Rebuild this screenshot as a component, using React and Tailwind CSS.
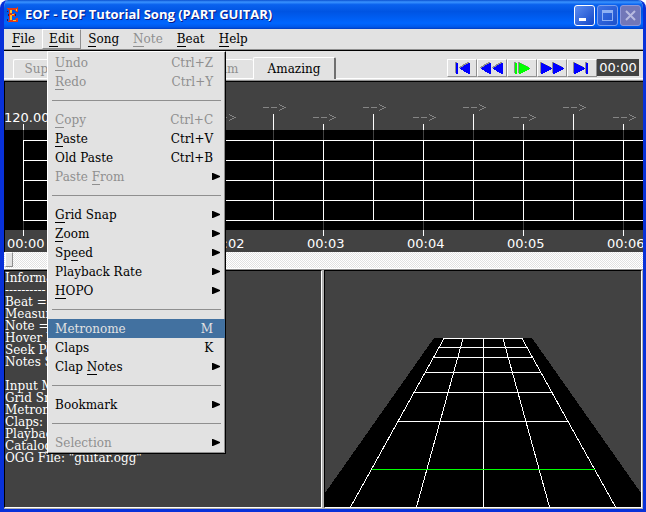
import React from 'react';

const SERIF = "font-['DejaVu_Serif','Liberation_Serif',serif]";
const DIGITS = "font-['DejaVu_Sans','Liberation_Sans',sans-serif]";

const menus = [
  { label: 'File', key: 'F' },
  { label: 'Edit', key: 'E', open: true },
  { label: 'Song', key: 'S' },
  { label: 'Note', key: 'N', disabled: true },
  { label: 'Beat', key: 'B' },
  { label: 'Help', key: 'H' },
];

const editItems = [
  { label: 'Undo', key: 'U', shortcut: 'Ctrl+Z', disabled: true },
  { label: 'Redo', key: 'R', shortcut: 'Ctrl+Y', disabled: true },
  null,
  { label: 'Copy', key: 'C', shortcut: 'Ctrl+C', disabled: true },
  { label: 'Paste', key: 'P', shortcut: 'Ctrl+V' },
  { label: 'Old Paste', shortcut: 'Ctrl+B' },
  { label: 'Paste From', key: 'F', sub: true, disabled: true },
  null,
  { label: 'Grid Snap', key: 'G', sub: true },
  { label: 'Zoom', key: 'Z', sub: true },
  { label: 'Speed', key: 'e', sub: true },
  { label: 'Playback Rate', sub: true },
  { label: 'HOPO', key: 'H', sub: true },
  null,
  { label: 'Metronome', shortcut: 'M', active: true },
  { label: 'Claps', shortcut: 'K' },
  { label: 'Clap Notes', key: 'N', sub: true },
  null,
  { label: 'Bookmark', sub: true },
  null,
  { label: 'Selection', sub: true, disabled: true },
];

const info = [
  'Informa',
  '----------',
  'Beat =',
  'Measur',
  'Note =',
  'Hover N',
  'Seek Po',
  'Notes S',
  '',
  'Input M',
  'Grid Sn',
  'Metron',
  'Claps: O',
  'Playbac',
  'Catalog',
  'OGG File: "guitar.ogg"',
];

function Label({ text, hot }) {
  const i = hot ? text.indexOf(hot) : -1;
  if (i < 0) return <span>{text}</span>;
  return (
    <span>
      {text.slice(0, i)}
      <span className="border-b border-current">{hot}</span>
      {text.slice(i + 1)}
    </span>
  );
}

function EofIcon() {
  return (
    <svg className="h-4 w-4" viewBox="0 0 16 16" shapeRendering="crispEdges" aria-hidden="true">
      <path d="M2 1h10v-1h1v5h-2V4h-1V3H7v4h2V6h1v4H9V9H7v4h3v-1h1v-1h2v4H3v-1h1V3H3V2H2z" fill="#e03a18" />
      <path d="M5 3h2v3H5zM5 8h2v5H5zM11 2h1v2h-1zM7 7h2v1H7zM8 13h3v1H8z" fill="#ffc02e" />
      <path d="M2 4h1v1H2zM3 7h1v2H3zM2 12h1v2H2zM10 7h1v2h-1z" fill="#5a1020" />
    </svg>
  );
}

function CaptionButton({ kind, name }) {
  const tone =
    kind === 'min'
      ? 'border-white bg-[linear-gradient(135deg,#5d8df0,#1247c8)]'
      : kind === 'max'
        ? 'border-[#7a9fee] bg-[linear-gradient(135deg,#3f72e4,#1b50cc)]'
        : 'border-[#8f97d8] bg-[#7277b8]';
  return (
    <button type="button" aria-label={name} className={'flex size-[21px] items-center justify-center rounded-[3px] border ' + tone}>
      <svg className="size-[19px]" viewBox="0 0 19 19" shapeRendering={kind === 'close' ? 'auto' : 'crispEdges'}>
        {kind === 'min' && <path d="M4 12h7v3H4z" fill="#fff" />}
        {kind === 'max' && <path d="M4 4h11v11H4zM5 7v7h9V7z" fill="#8eb0f4" fillRule="evenodd" />}
        {kind === 'close' && <path d="M5 5l9 9M14 5l-9 9" stroke="#b9bbe0" strokeWidth="2" />}
      </svg>
    </button>
  );
}

const transport = [
  ['Rewind to start', '#00f', ['M8 5h2v11H8z', 'M22 5v11h-1L12 11v-1l9-5z']],
  ['Rewind', '#00f', ['M13 5v11h-1L3 11v-1l9-5z', 'M25 5v11h-1l-9-5v-1l9-5z']],
  ['Play', '#0f0', ['M7 5h2v11H7z', 'M11 5h1l10 5v1l-10 5h-1z']],
  ['Fast forward', '#00f', ['M3 5h1l10 5v1L4 16H3z', 'M15 5h1l10 5v1l-10 5h-1z']],
  ['Skip to end', '#00f', ['M6 5h1l10 5v1L7 16H6z', 'M18 5h2v11h-2z']],
];

function Transport() {
  return (
    <div className="mt-2 mr-1 flex h-[18px]">
      {transport.map(([name, color, shapes]) => (
        <button key={name} type="button" aria-label={name} className="h-[18px] w-[30px] border border-[#8f8f8f] border-t-white border-l-white">
          <svg className="block h-4 w-7" viewBox="0 2 28 16" shapeRendering="crispEdges">
            <g transform="translate(-1 -1)" fill="#8f8f8f">{shapes.map((d) => <path key={d} d={d} />)}</g>
            <g fill={color}>{shapes.map((d) => <path key={d} d={d} />)}</g>
          </svg>
        </button>
      ))}
      <output aria-label="Position" className={'flex h-[17px] w-[42px] items-center justify-center bg-[#424242] text-[13px] text-white ' + DIGITS}>
        00:00
      </output>
    </div>
  );
}

function PianoRoll() {
  const beats = Array.from({ length: 13 }, (_, i) => i);
  return (
    <svg className="block h-[170px] w-full bg-[#424242]" role="img" aria-label="Note editor">
      <rect y="48" width="100%" height="100" fill="#000" />
      <g shapeRendering="crispEdges">
        {[58, 78, 98, 118, 138].map((y) => (
          <rect key={y} x="18" y={y} width="100%" height="1" fill="#fff" />
        ))}
        {beats.map((i) => {
          const x = 18 + i * 50;
          const second = i % 2 === 0;
          return (
            <g key={i}>
              <rect x={x} y={second ? 42 : 32} width="1" height={second ? 6 : 16} fill="#fff" />
              <rect x={x} y="48" width="1" height="10" fill="#424242" />
              <rect x={x} y="58" width="1" height="81" fill="#fff" />
              {second && <rect x={x} y="139" width="1" height="9" fill="#424242" />}
              {second && <rect x={x} y="148" width="1" height="6" fill="#fff" />}
              {i > 0 && (
                <path
                  d={`M${x - 10} ${second ? 35.5 : 25.5}h6m2 0h6m2-3l6 3l-6 3`}
                  fill="none"
                  stroke="#858585"
                />
              )}
            </g>
          );
        })}
      </g>
      <g fill="#fff" className={'text-[13px] ' + DIGITS}>
        <text x="-1" y="40">120.00</text>
        {[0, 1, 2, 3, 4, 5, 6].map((s) => (
          <text key={s} x={2 + s * 100} y="166">{`00:0${s}`}</text>
        ))}
      </g>
    </svg>
  );
}

function Fretboard() {
  return (
    <svg className="block h-full w-full" viewBox="0 0 316 236" preserveAspectRatio="xMidYMin slice" shapeRendering="crispEdges" role="img" aria-label="3D preview">
      <path d="M109 67h98l109 155v14H0v-14z" fill="#000" />
      <g stroke="#fff" fill="none">
        <path d="M119 67.5h78M114 76.5h88M109 86.5h98M101 101.5h114M90 121.5h136M73 150.5h170" />
        <path d="M158.500 67v169M119 67.5L25.500 236M138 67.5L91.500 236M178 67.500L224.500 236M197 67.500L290.500 236" />
      </g>
      <path d="M47 198.500h223" stroke="#0f0" />
    </svg>
  );
}

function MenuItem({ item }) {
  if (!item) return <div role="separator" className="mx-1 flex h-[19px] items-center"><div className="h-px w-full bg-[#8f8f8f]" /></div>;
  const tone = item.active ? 'bg-[#4271a0] text-[#e2e2e2]' : item.disabled ? 'text-[#8f8f8f]' : 'text-black';
  return (
    <button type="button" role="menuitem" disabled={item.disabled} className={'flex h-[19px] w-full items-center justify-between pr-3 pl-[7px] leading-[14px] ' + tone}>
      <Label text={item.label} hot={item.key} />
      {item.shortcut && <span>{item.shortcut}</span>}
      {item.sub && (
        <svg className="-mr-[7px] h-[7px] w-2" viewBox="0 0 8 7" aria-hidden="true">
          <path d="M0 0h1l7 3v1L1 7H0z" fill="#000" />
        </svg>
      )}
    </button>
  );
}

export default function App() {
  return (
    <div className={'flex h-screen min-h-[512px] flex-col overflow-hidden rounded-t-lg border-r-[3px] border-b-[3px] border-l-4 border-[#0831d9] bg-[#e2e2e2] text-xs whitespace-nowrap ' + SERIF}>
      <header className="-mr-[3px] -ml-1 flex h-[29px] shrink-0 items-center gap-1 bg-[linear-gradient(#0a50d0_0%,#3a93ff_7%,#0a62ee_16%,#0054e3_40%,#0066ff_80%,#0058ea_93%,#003cc0_100%)] pt-px pr-[5px] pl-[5px]">
        <EofIcon />
        <h1 className="flex-1 font-['Open_Sans','Noto_Sans',sans-serif] text-[13px] font-bold text-white [text-shadow:1px_1px_#0a1883]">EOF - EOF Tutorial Song (PART GUITAR)</h1>
        <div className="flex gap-[2px]">
          <CaptionButton kind="min" name="Minimize" />
          <CaptionButton kind="max" name="Maximize" />
          <CaptionButton kind="close" name="Close" />
        </div>
      </header>

      <nav className="relative z-10 flex h-[22px] shrink-0 border-b border-black pl-px shadow-[inset_0_-1px_#8f8f8f]">
        {menus.map((m) => (
          <div key={m.label} className="relative">
            <button
              type="button"
              disabled={m.disabled}
              className={'h-5 border px-[6px] leading-[14px] ' + (m.open ? 'border-[#8f8f8f] border-t-white border-l-white' : 'border-transparent') + (m.disabled ? ' text-[#8f8f8f]' : ' text-black')}
            >
              <Label text={m.label} hot={m.key} />
            </button>
            {m.open && (
              <div role="menu" className="absolute top-[22px] left-[5px] w-[179px] border border-black border-t-white border-l-white bg-[#e2e2e2] py-px shadow-[inset_-1px_-1px_#8f8f8f]">
                {editItems.map((item, i) => <MenuItem key={i} item={item} />)}
              </div>
            )}
          </div>
        ))}
      </nav>

      <div className="flex h-[30px] shrink-0 items-end border-b border-[#8f8f8f] pb-px">
        <div role="tablist" className="flex items-end">
          <div role="presentation" className="w-[9px] border-b border-white" />
          {['Supaeasy', 'Easy', 'Medium'].map((t) => (
            <button key={t} type="button" role="tab" className="h-5 w-20 rounded-t-xs border-t border-b border-l border-white text-[#8f8f8f]">{t}</button>
          ))}
          <button type="button" role="tab" aria-selected="true" className="h-[22px] w-[83px] rounded-t-xs border-t border-r-2 border-l border-white border-r-[#6f6f6f] text-black">Amazing</button>
        </div>
        <div className="flex h-full flex-1 justify-end border-b border-white"><Transport /></div>
      </div>

      <section className="shrink-0 border-t border-l border-black"><PianoRoll /></section>

      <div className="h-[17px] shrink-0 border-b border-white bg-[conic-gradient(#fff_25%,#e2e2e2_0_50%,#fff_0_75%,#e2e2e2_0)] bg-[length:2px_2px]">
        <button type="button" aria-label="Scroll position" className="ml-px block h-[15px] w-2 border border-[#8f8f8f] border-t-white border-l-white bg-[#e2e2e2]" />
      </div>

      <main className="grid min-h-0 flex-1 grid-cols-2 gap-[2px] border-t border-[#8f8f8f] bg-[#b0b0b0] pr-px pb-px">
        <pre className={'min-w-0 overflow-hidden border border-black border-r-white border-b-white bg-[#424242] pt-px text-xs leading-3 text-white ' + SERIF}>{info.join('\n')}</pre>
        <section className="min-w-0 overflow-hidden border border-black border-r-white border-b-white bg-[#424242]"><Fretboard /></section>
      </main>
    </div>
  );
}
